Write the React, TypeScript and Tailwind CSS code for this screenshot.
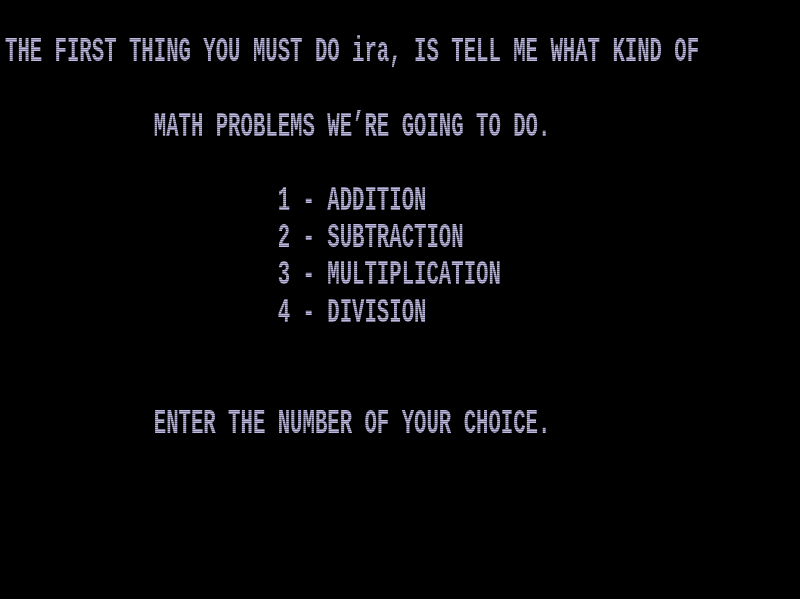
const rows: string[] = [
  '',
  'THE FIRST THING YOU MUST DO ira, IS TELL ME WHAT KIND OF',
  '',
  '            MATH PROBLEMS WE\u2019RE GOING TO DO.',
  '',
  '                      1 - ADDITION',
  '                      2 - SUBTRACTION',
  '                      3 - MULTIPLICATION',
  '                      4 - DIVISION',
  '',
  '',
  '            ENTER THE NUMBER OF YOUR CHOICE.',
  '',
  '',
  '',
  '',
]

export default function App() {
  return (
    <div className="relative w-[800px] h-[599px] bg-black overflow-hidden">
      <div className="flex flex-col pl-[5px] pt-[7px] blur-[0.4px]">
        {rows.map((line, i) => (
          <div key={i} className="h-[37.2px] shrink-0 flex items-start leading-none">
            <span
              className="block origin-top scale-y-[1.68] whitespace-pre text-[20.67px] leading-[9px] font-bold text-[#bdb9e0]"
              style={{ fontFamily: '"Liberation Mono", monospace' }}
            >
              {line}
            </span>
          </div>
        ))}
      </div>
      {/* scanlines */}
      <div className="absolute inset-0 pointer-events-none bg-[repeating-linear-gradient(to_bottom,transparent_0px,transparent_1px,rgba(0,0,0,0.35)_1px,rgba(0,0,0,0.35)_2px)]" />
    </div>
  )
}
